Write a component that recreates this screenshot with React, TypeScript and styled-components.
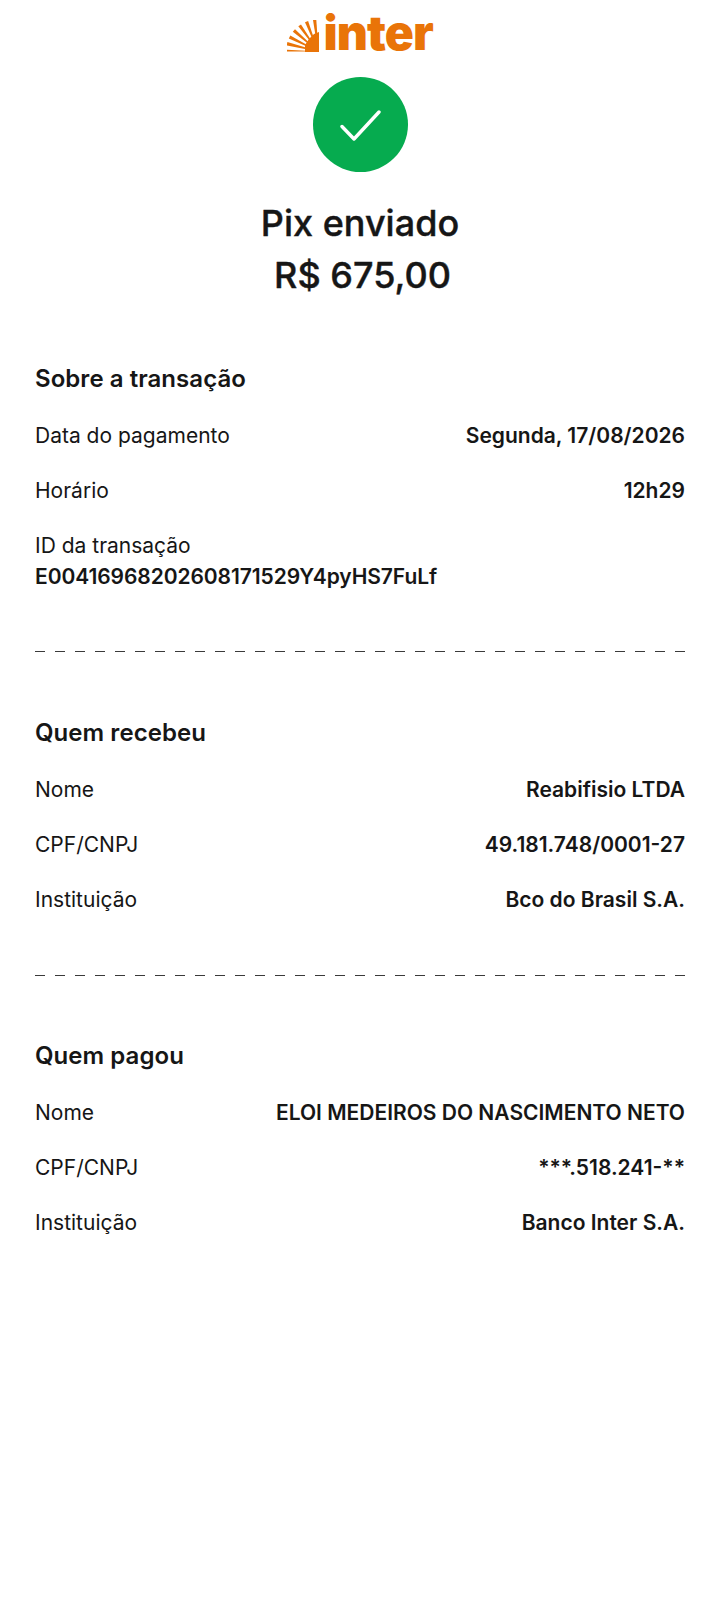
import styled, { createGlobalStyle } from 'styled-components';

const GlobalStyle = createGlobalStyle`
  html, body {
    margin: 0;
    padding: 0;
    background: #ffffff;
  }
  body {
    font-family: Inter, "Liberation Sans", sans-serif;
    color: #161616;
  }
`;

const Page = styled.div`
  width: 720px;
  height: 1598px;
  overflow: hidden;
  display: flex;
  flex-direction: column;
  background: #ffffff;
`;

const Header = styled.header`
  display: flex;
  flex-direction: column;
  align-items: center;
  padding-top: 6px;
`;

const Logo = styled.div`
  display: flex;
  align-items: flex-end;
  gap: 4.5px;
  height: 50px;
  color: #e97408;
`;

const LogoWord = styled.span`
  font-size: 48px;
  line-height: 46px;
  font-weight: 900;
  letter-spacing: -0.9px;
`;

const SunSvg = styled.svg`
  margin-bottom: 3px;
`;

const SuccessBadge = styled.div`
  width: 95px;
  height: 95px;
  margin-top: 21px;
  border-radius: 50%;
  background: #06ab4f;
  display: flex;
  align-items: center;
  justify-content: center;
`;

const Title = styled.h1`
  margin: 25px 0 0;
  font-size: 36px;
  line-height: 52px;
  font-weight: 500;
  -webkit-text-stroke: 0.4px #161616;
`;

const Amount = styled.div`
  padding-left: 5px;
  font-size: 36px;
  line-height: 52px;
  font-weight: 500;
  -webkit-text-stroke: 0.4px #161616;
`;

const Section = styled.section<{ $top: number; $bottom: number }>`
  display: flex;
  flex-direction: column;
  padding: 0 35px ${(p) => p.$bottom}px;
  margin-top: ${(p) => p.$top}px;
`;

const SectionTitle = styled.h2`
  margin: 0 0 21px;
  font-size: 24px;
  line-height: 40px;
  font-weight: 600;
  letter-spacing: 0.05px;
`;

const Row = styled.div`
  display: flex;
  justify-content: space-between;
  min-height: 55px;
  font-size: 21px;
  line-height: 31px;
`;

const StackRow = styled.div`
  display: flex;
  flex-direction: column;
  font-size: 21px;
  line-height: 31px;
`;

const Label = styled.span`
  font-weight: 400;
`;

const Value = styled.span`
  font-weight: 600;
`;

const TransactionId = styled(Value)`
  letter-spacing: -0.08px;
`;

const Dashes = styled.div`
  height: 1px;
  margin: 0 35px;
  background: repeating-linear-gradient(to right, #3a3a3a 0 10px, transparent 10px 20px);
`;

const rays = [0, 14, 27, 41, 55, 69, 84];

const SunMark = () => (
  <SunSvg width="32" height="33" viewBox="0 0 32 33" fill="#e97408">
    <path d="M32 32H18V25L22 19L27 14L32 12z" />
    {rays.map((a) => {
      const point = (deg: number, r: number) => {
        const rad = (deg * Math.PI) / 180;
        return `${(31 - r * Math.cos(rad)).toFixed(1)},${(31.5 - r * Math.sin(rad)).toFixed(1)}`;
      };
      const low = a === 0 ? 0 : a - 3;
      return (
        <polygon
          key={a}
          points={`${point(low, 12)} ${point(low, 32)} ${point(a + 3, 32)} ${point(a + 4, 12)}`}
        />
      );
    })}
  </SunSvg>
);

const CheckIcon = () => (
  <svg width="41" height="33" viewBox="0 0 41 33" fill="none">
    <path d="M2 18.5 14 31 39 4" stroke="#ffffff" strokeWidth="3.4" strokeLinecap="round" strokeLinejoin="round" />
  </svg>
);

const receiver = [
  ['Nome', 'Reabifisio LTDA'],
  ['CPF/CNPJ', '49.181.748/0001-27'],
  ['Instituição', 'Bco do Brasil S.A.'],
];

const payer = [
  ['Nome', 'ELOI MEDEIROS DO NASCIMENTO NETO'],
  ['CPF/CNPJ', '***.518.241-**'],
  ['Instituição', 'Banco Inter S.A.'],
];

export default function App() {
  return (
    <Page>
      <GlobalStyle />
      <Header>
        <Logo>
          <SunMark />
          <LogoWord>inter</LogoWord>
        </Logo>
        <SuccessBadge>
          <CheckIcon />
        </SuccessBadge>
        <Title>Pix enviado</Title>
        <Amount>R$ 675,00</Amount>
      </Header>

      <Section $top={58} $bottom={59}>
        <SectionTitle>Sobre a transação</SectionTitle>
        <Row>
          <Label>Data do pagamento</Label>
          <Value>Segunda, 17/08/2026</Value>
        </Row>
        <Row>
          <Label>Horário</Label>
          <Value>12h29</Value>
        </Row>
        <StackRow>
          <Label>ID da transação</Label>
          <TransactionId>E00416968202608171529Y4pyHS7FuLf</TransactionId>
        </StackRow>
      </Section>
      <Dashes />

      <Section $top={61} $bottom={36}>
        <SectionTitle>Quem recebeu</SectionTitle>
        {receiver.map(([label, value]) => (
          <Row key={label}>
            <Label>{label}</Label>
            <Value>{value}</Value>
          </Row>
        ))}
      </Section>
      <Dashes />

      <Section $top={60} $bottom={0}>
        <SectionTitle>Quem pagou</SectionTitle>
        {payer.map(([label, value]) => (
          <Row key={label}>
            <Label>{label}</Label>
            <Value>{value}</Value>
          </Row>
        ))}
      </Section>
    </Page>
  );
}
